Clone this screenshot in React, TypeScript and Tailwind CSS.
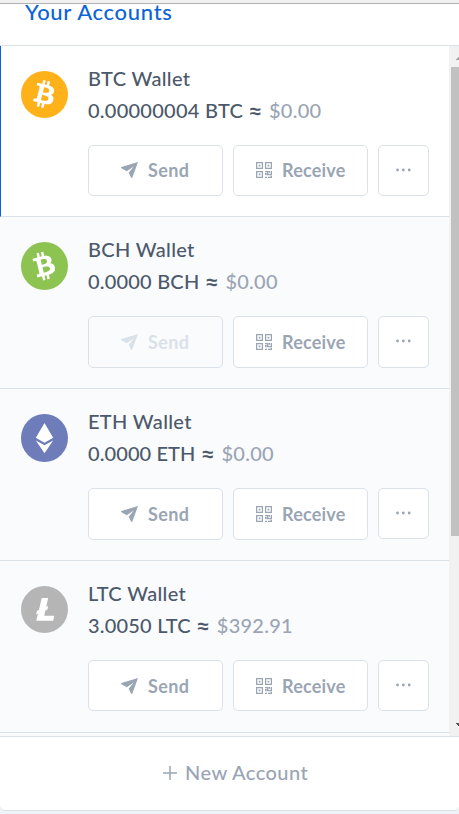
import { clsx } from 'clsx';

const BITCOIN_PATH =
  'M23.189 14.02c.314-2.096-1.283-3.223-3.465-3.975l.708-2.84-1.728-.43-.69 2.765c-.454-.114-.92-.22-1.385-.326l.695-2.783L15.596 6l-.708 2.839c-.376-.086-.746-.17-1.104-.26l.002-.009-2.384-.595-.46 1.846s1.283.294 1.256.312c.7.175.826.638.805 1.006l-.806 3.235c.048.012.11.03.18.057l-.183-.045-1.13 4.532c-.086.212-.303.531-.793.41.018.025-1.256-.313-1.256-.313l-.858 1.978 2.25.561c.418.105.828.215 1.231.318l-.715 2.872 1.727.43.708-2.84c.472.127.93.245 1.378.357l-.706 2.828 1.728.43.715-2.866c2.948.558 5.164.333 6.097-2.333.752-2.146-.037-3.385-1.588-4.192 1.13-.26 1.98-1.003 2.207-2.538zm-3.95 5.538c-.533 2.147-4.148.986-5.32.695l.95-3.805c1.172.293 4.929.872 4.37 3.11zm.535-5.569c-.487 1.953-3.495.96-4.47.717l.86-3.45c.975.243 4.118.696 3.61 2.733z';

const CoinIcon = ({ coin }: { coin: string }) => {
  const colors: any = { BTC: '#ffb119', BCH: '#8dc351', ETH: '#6f7cba', LTC: '#b5b5b5' };
  const tall = coin === 'BCH' || coin === 'ETH';

  return (
    <svg
      viewBox="0 0 32 32"
      preserveAspectRatio="none"
      className={clsx('mt-[25px] w-[47px] shrink-0', tall ? 'h-12' : 'h-[47px]')}
    >
      <circle cx="16" cy="16" r="16" fill={colors[coin]} />
      {coin === 'BTC' && <path transform="translate(.2 .3) scale(.96)" fill="#fff" d={BITCOIN_PATH} />}
      {coin === 'BCH' && (
        <path transform="rotate(-28 16 16) translate(.1 .3) scale(.96)" fill="#fff" d={BITCOIN_PATH} />
      )}
      {coin === 'ETH' && (
        <path fill="#fff" d="M16 6l5.9 9.8L16 19.1l-5.9-3.3zM10.1 17.7l5.9 3.2 5.9-3.2L16 26.2z" />
      )}
      {coin === 'LTC' && (
        <path
          fill="#fff"
          d="M11.5 18.9l-1.2.5.6-2.5 1.3-.5 1.9-8.2h4.4l-1.3 5.9 1.3-.5-.6 2.5-1.3.5-.8 3.6h6.9l-.8 3.5H10.4z"
        />
      )}
    </svg>
  );
};

const SendIcon = () => (
  <svg viewBox="0 0 16 16" className="-ml-px h-4 w-[17px]" preserveAspectRatio="none" fill="currentColor">
    <path d="M16 0L.4 5q-.7.6 0 1.2L5.4 9.2 12 4.6 7.2 10.8 9.4 15.6q.7.7 1.3 0z" />
  </svg>
);

const QrIcon = () => (
  <svg viewBox="0 0 16 16" className="size-4" fill="none" stroke="currentColor">
    <path strokeWidth="1.3" d="M.6.6h5.8v5.8H.6zM9.6.6h5.8v5.8H9.6zM.6 9.6h5.8v5.8H.6z" />
    <path fill="currentColor" stroke="none" d="M2.7 2.7h1.7v1.7H2.7zM11.6 2.7h1.7v1.7h-1.7zM2.7 11.6h1.7v1.7H2.7z" />
    <path strokeWidth="1.4" d="M9 9.6h2.7v3h3.7V9M13.4 9v1.8M9 11.7h1v1.5M9 15.4h2M12 15.4h4M15.4 13.8V16" />
  </svg>
);

interface Account {
  coin: string;
  amount: string;
  fiat: string;
  amountClass: string;
  active?: boolean;
  sendDisabled?: boolean;
}

const accounts: Account[] = [
  { coin: 'BTC', amount: '0.00000004', fiat: '$0.00', amountClass: 'tracking-[0.25px]', active: true },
  { coin: 'BCH', amount: '0.0000', fiat: '$0.00', amountClass: 'tracking-[0.2px]', sendDisabled: true },
  { coin: 'ETH', amount: '0.0000', fiat: '$0.00', amountClass: 'tracking-[0.1px]' },
  { coin: 'LTC', amount: '3.0050', fiat: '$392.91', amountClass: 'tracking-[0.2px]' }
];

const buttonBase =
  'flex items-center rounded-[5px] border border-[#dae1e9] bg-white text-lg font-bold text-[#9aa5b4]';

const AccountRow = ({ account }: { account: Account }) => (
  <div
    className={clsx(
      'flex shrink-0 gap-5 border-b border-b-[#dae1e9]',
      account.active ? 'h-[171px] border-l border-l-[#0a64d6] bg-white pl-5' : 'h-[172px] bg-[#fafbfd] pl-[21px]'
    )}
  >
    <CoinIcon coin={account.coin} />
    <div className="pt-4">
      <div className="h-8 text-xl leading-8 font-medium tracking-[0.33px] whitespace-nowrap text-[#4c596b]">
        {account.coin} Wallet
      </div>
      <div className="flex h-8 text-xl leading-8 font-medium whitespace-nowrap text-[#4c596b]">
        <span className={account.amountClass}>{account.amount} {account.coin}</span>
        <span className="ml-[7px] w-[13px] pt-px font-['Noto_Sans','Liberation_Sans',sans-serif] font-bold">≈</span>
        <span className="ml-1.5 tracking-[0.25px] text-[#9aa5b4]">{account.fiat}</span>
      </div>
      <div
        className={clsx(
          'mt-[19px] flex gap-2.5',
          account.active || account.coin === 'LTC' ? 'h-[51px]' : 'h-[52px]'
        )}
      >
        <button
          className={clsx(
            buttonBase,
            'w-[135px] gap-[9px] pl-[33px] tracking-[0.4px]',
            account.active && 'pb-0.5',
            account.sendDisabled && 'bg-transparent! text-[#dae1e9]!'
          )}
        >
          <SendIcon />
          <span className="pl-px">Send</span>
        </button>
        <button className={clsx(buttonBase, 'w-[135px] gap-2.5 pl-[22px] tracking-[0.2px]', account.active && 'pb-0.5')}>
          <QrIcon />
          Receive
        </button>
        <button className={clsx(buttonBase, 'w-[51px] pl-[17px]', account.coin === 'ETH' && 'h-[51px]')}>
          <svg viewBox="0 0 16 4" className="mb-0.5 h-1 w-4" fill="currentColor">
            <circle cx="1.5" cy="2" r="1.4" />
            <circle cx="7.3" cy="2" r="1.4" />
            <circle cx="13.2" cy="2" r="1.4" />
          </svg>
        </button>
      </div>
    </div>
  </div>
);

const Scrollbar = () => (
  <div className="flex w-2.5 shrink-0 flex-col justify-between overflow-hidden bg-[#f1f1f1] pl-0.5">
    <div>
      <svg viewBox="0 0 8 21" className="h-[21px] w-2" fill="#a3a3a3" shapeRendering="crispEdges">
        <path d="M4 14l4-4v4z" />
      </svg>
      <div className="h-[469px] bg-[#c1c1c1]" />
    </div>
    <svg viewBox="0 0 8 17" className="h-[17px] w-2" fill="#505050" shapeRendering="crispEdges">
      <path d="M4 4h4v4z" />
    </svg>
  </div>
);

export default function App() {
  return (
    <div className="h-[814px] w-[459px] overflow-hidden bg-[#eff3f7] font-['Lato','Liberation_Sans',sans-serif]">
      <div className="h-[4px] border-b border-[#b2b2b2] bg-[#f1f1f1]" />
      <div className="flex h-[807px] flex-col overflow-hidden rounded-b-[5px] border-b border-[#dae1e9] bg-white">
        <div className="h-[42px] shrink-0 overflow-hidden border-b border-[#dae1e9] pl-[25px]">
          <h2 className="-mt-[7px] text-[22px] leading-[30px] font-medium tracking-[0.7px] whitespace-nowrap text-[#0a64d6]">
            Your Accounts
          </h2>
        </div>
        <div className="flex h-[690px] shrink-0">
          <div className="flex min-w-0 flex-1 flex-col overflow-hidden bg-[#fafbfd]">
            {accounts.map((a) => <AccountRow key={a.coin} account={a} />)}
          </div>
          <Scrollbar />
        </div>
        <button className="flex flex-1 items-center gap-2 border-t border-[#dae1e9] pl-[163px] text-xl font-medium tracking-[0.45px] text-[#9aa5b4]">
          <svg viewBox="0 0 14 14" className="-mt-px size-3.5" stroke="currentColor" strokeWidth="1.5">
            <path d="M7 0v14M0 7h14" />
          </svg>
          <span className="-mt-[3px]">New Account</span>
        </button>
      </div>
    </div>
  );
}
